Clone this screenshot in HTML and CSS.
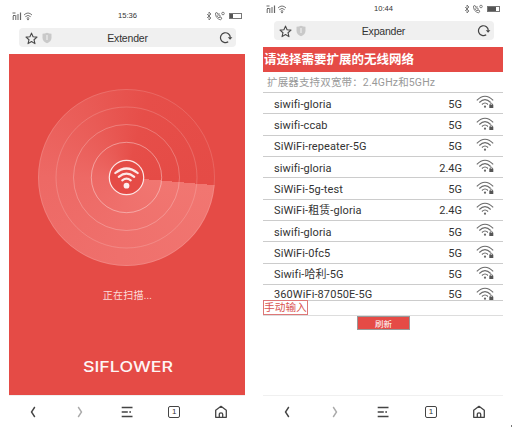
FILE: index.html
```
<!DOCTYPE html>
<html lang="zh-CN">
<head>
<meta charset="utf-8">
<title>Extender</title>
<link rel="stylesheet" href="styles.css">
</head>
<body>
<svg class="defs" width="0" height="0">
  <symbol id="signal" viewBox="0 0 24 10"><g fill="none" stroke="#666" stroke-width="1"><path d="M.5 2h3M1 4.500h2M1.200 5v4M3.800 4v5M6 3v6"/><path d="M8.500 1.500v7.500" stroke-width="1.200"/><path d="M12 4q4-4 8 0M13.300 5.700q2.700-2.600 5.400 0M14.700 7.300q1.300-1.300 2.600 0" stroke-width=".9"/></g><circle cx="16" cy="8.400" r=".8" fill="#555"/></symbol>
  <symbol id="tele" viewBox="0 0 20 10"><g fill="none" stroke="#666" stroke-width=".8"><path d="M1 3l4 4-2 2V1l2 2-4 4"/><path d="M9.500 2q-.5 5 5 7l1.500-2-2-1-1 1q-1.500-1-2-2.500l1-1-1-2z"/><path d="M13 2v3h2"/><circle cx="17" cy="2.500" r="1.300"/></g></symbol>
  <symbol id="star" viewBox="0 0 14 14"><path d="M7 1.200l1.700 3.900 4.200.4-3.200 2.800 1 4.200L7 10.300l-3.700 2.200 1-4.200L1.100 5.500l4.200-.4z" fill="none" stroke="#484848" stroke-width="1.200" stroke-linejoin="round"/></symbol>
  <symbol id="shield" viewBox="0 0 10 12"><path d="M5 .7q2.200 1 4.500 1v4q0 3.800-4.500 5.600Q.5 9.500.5 5.700v-4q2.300 0 4.500-1z" fill="#c9c9c9"/><path d="M5 3v5" stroke="#eee" stroke-width="1.200"/></symbol>
  <symbol id="reload" viewBox="0 0 14 12"><path d="M9.200 9.700A4.900 4.900 0 1 1 11.300 5.500" fill="none" stroke="#444" stroke-width="1.200"/><path d="M8.800 5.200h4.600l-2.300 2.600z" fill="#444"/></symbol>
  <symbol id="back" viewBox="0 0 8 12"><path d="M5.800 1L2.500 6l3.300 5" fill="none" stroke="currentColor" stroke-width="1.400"/></symbol>
  <symbol id="menu" viewBox="0 0 12 12"><path d="M.7 1.500h10.800M.7 6h6.100M8.300 6h1.700M.7 10.500h10.800" fill="none" stroke="#444" stroke-width="1.300"/></symbol>
  <symbol id="home" viewBox="0 0 14 14"><path d="M1.700 5.300L7 1.300l5.300 4v7H1.700zM5.300 12V9.300q0-1.500 1.700-1.500t1.700 1.500V12" fill="none" stroke="#444" stroke-width="1.300" stroke-linejoin="round"/></symbol>
  <symbol id="wifi" viewBox="0 0 18 14"><g fill="none" stroke="#6b6b6b" stroke-width="1.100"><path d="M.8 5.300Q9-2.900 17.200 5.300M3.300 7.500Q9 1.900 14.700 7.500M5.900 9.500Q9 6.500 12.100 9.500"/></g><circle cx="9" cy="11.700" r="1.100" fill="#666"/></symbol>
  <symbol id="wifi-lock" viewBox="0 0 18 14"><use href="#wifi" width="18" height="14"/><path d="M12.300 8h5.700v6h-5.700z" fill="#fff"/><path d="M13.300 9.700h4v3.300h-4z" fill="#555"/><path d="M14.200 10V8.900q1.100-1.300 2.200 0V10" fill="none" stroke="#555" stroke-width=".8"/></symbol>
</svg>
<main class="screens">
  <section class="phone extender">
    <header class="status">
      <svg class="signal"><use href="#signal"/></svg>
      <span class="clock">15:36</span>
      <span class="right"><svg class="tele"><use href="#tele"/></svg><i class="battery low"></i></span>
    </header>
    <div class="address">
      <div class="marks"><svg class="star"><use href="#star"/></svg><svg class="shield"><use href="#shield"/></svg></div>
      <span class="title">Extender</span>
      <svg class="reload"><use href="#reload"/></svg>
    </div>
    <div class="scan">
      <div class="radar">
        <svg viewBox="0 0 177 177" width="177" height="177">
          <g fill="none" stroke="#fff"><circle cx="88.500" cy="88.500" r="88" opacity=".14"/><circle cx="88.500" cy="88.500" r="70.500" opacity=".17"/><circle cx="88.500" cy="88.500" r="53" opacity=".24"/><circle cx="88.500" cy="88.500" r="35.200" opacity=".38"/></g>
          <circle cx="88.500" cy="88.500" r="17.200" fill="#e54b46" stroke="#fff" stroke-width="1.200" stroke-opacity=".85"/>
          <g fill="none" stroke="#fff" stroke-width="2.200" stroke-linecap="round" opacity=".88"><path d="M77.300 84Q88.500 75 99.700 84M80.800 87.800Q88.500 81.500 96.200 87.800M84.300 91.300Q88.500 88.100 92.700 91.300"/></g>
          <circle cx="88.500" cy="96.700" r="2.900" fill="#fff" opacity=".9"/>
        </svg>
      </div>
      <p class="scanning">正在扫描...</p>
      <svg class="brand" width="90" height="14" viewBox="0 0 90 14"><text x="0" y="12" textLength="90" lengthAdjust="spacingAndGlyphs">SIFLOWER</text></svg>
    </div>
    <nav class="toolbar">
      <svg class="arrow"><use href="#back"/></svg><svg class="arrow next"><use href="#back"/></svg><svg class="menu"><use href="#menu"/></svg><b class="tabs">1</b><svg class="home"><use href="#home"/></svg>
    </nav>
  </section>

  <section class="phone expander">
    <header class="status">
      <svg class="signal"><use href="#signal"/></svg>
      <span class="clock">10:44</span>
      <span class="right"><svg class="tele"><use href="#tele"/></svg><i class="battery"></i></span>
    </header>
    <div class="address">
      <div class="marks"><svg class="star"><use href="#star"/></svg><svg class="shield"><use href="#shield"/></svg></div>
      <span class="title">Expander</span>
      <svg class="reload"><use href="#reload"/></svg>
    </div>
    <div class="networks">
      <h1>请选择需要扩展的无线网络</h1>
      <p class="hint">扩展器支持双宽带：2.4GHz和5GHz</p>
      <ul>
        <li><span>siwifi-gloria</span><em>5G</em><svg><use href="#wifi-lock"/></svg></li>
        <li><span>siwifi-ccab</span><em>5G</em><svg><use href="#wifi-lock"/></svg></li>
        <li><span>SiWiFi-repeater-5G</span><em>5G</em><svg><use href="#wifi"/></svg></li>
        <li><span>siwifi-gloria</span><em>2.4G</em><svg><use href="#wifi-lock"/></svg></li>
        <li><span>SiWiFi-5g-test</span><em>5G</em><svg><use href="#wifi-lock"/></svg></li>
        <li><span>SiWiFi-租赁-gloria</span><em>2.4G</em><svg><use href="#wifi"/></svg></li>
        <li><span>siwifi-gloria</span><em>5G</em><svg><use href="#wifi-lock"/></svg></li>
        <li><span>SiWiFi-0fc5</span><em>5G</em><svg><use href="#wifi-lock"/></svg></li>
        <li><span>Siwifi-哈利-5G</span><em>5G</em><svg><use href="#wifi-lock"/></svg></li>
        <li><span>360WiFi-87050E-5G</span><em>5G</em><svg><use href="#wifi-lock"/></svg></li>
      </ul>
      <div class="manual"><span>手动输入</span></div>
      <button>刷新</button>
    </div>
    <nav class="toolbar">
      <svg class="arrow"><use href="#back"/></svg><svg class="arrow next"><use href="#back"/></svg><svg class="menu"><use href="#menu"/></svg><b class="tabs">1</b><svg class="home"><use href="#home"/></svg>
    </nav>
  </section>
  <i class="tick"></i>
</main>
</body>
</html>
```
FILE: styles.css
```
* { box-sizing: border-box; }
body { margin: 0; background: #fff; color: #333; font-family: Roboto, "Noto Sans CJK SC", sans-serif; overflow: hidden; }
svg { display: block; flex: none; }
.defs { position: absolute; }
.screens { display: flex; width: 527px; height: 427px; padding-left: 9px; }
.phone { display: flex; flex-direction: column; height: 427px; flex: none; }
.extender { width: 236px; margin-right: 18px; padding-top: 10px; }
.expander { width: 240px; padding-top: 3px; }

.status { display: grid; grid-template-columns: 1fr auto 1fr; align-items: center; height: 12px; padding: 0 3px; }
.signal { width: 24px; height: 10px; }
.clock { padding-left: 1px; font: 7.600px/12px "Liberation Sans", sans-serif; }
.right { display: flex; align-items: center; justify-content: flex-end; gap: 3px; }
.tele { width: 20px; height: 10px; }
.battery { width: 13px; height: 6px; border: 1px solid #777; background: linear-gradient(90deg, #555 70%, #fff 70%); }
.battery.low { background: linear-gradient(90deg, #555 30%, #fff 30%); }

.address { display: grid; grid-template-columns: 1fr auto 1fr; align-items: center; height: 19px; margin: 6px 9px 0 10px; padding: 0 3px 0 6px; background: #f0f0f0; border-radius: 4px; }
.marks { display: flex; align-items: center; gap: 4px; }
.star { width: 13px; height: 13px; }
.shield { width: 10px; height: 12px; }
.title { margin-right: 3px; text-align: center; font: 10.500px/20px "Liberation Sans", sans-serif; letter-spacing: -.2px; }
.reload { width: 14px; height: 12px; justify-self: end; }

.scan { height: 341px; margin-top: 7px; padding-top: 35px; display: flex; flex-direction: column; align-items: center; background: #e54b46; }
.radar { width: 177px; height: 177px; margin-right: 2px; border-radius: 50%; background: conic-gradient(from 95deg, #f17671 0deg, #ef706c 90deg, #ed6965 175deg, #e95b56 235deg, #e64e49 280deg, #e54b46 360deg); }
.scanning { margin: 22px 0 0 1px; font-size: 10px; line-height: 15px; color: #fbdcda; letter-spacing: .2px; }
.brand { margin-top: 57px; margin-left: 1px; overflow: visible; opacity: .95; }
.brand text { font: 500 14.500px Inter, sans-serif; fill: #fff; }

.toolbar { display: grid; grid-template-columns: repeat(5, 1fr); place-items: center; height: 32px; margin-top: auto; border-top: 1px solid #f0f0f0; }
.arrow { width: 8px; height: 12px; color: #444; }
.next { color: #aaa; transform: scaleX(-1); }
.menu { width: 12px; height: 12px; }
.tabs { width: 12px; height: 12px; border: 1.500px solid #444; border-radius: 2px; font: 8px/10px "Liberation Sans", sans-serif; text-align: center; }
.home { width: 14px; height: 14px; }

.expander .address { margin: 6px 9px 0 11px; padding-left: 5px; }
.networks { margin-top: 7px; }
.networks h1 { margin: 0; height: 25px; padding-left: 1px; background: #e54b46; color: #fff; font-size: 12.500px; line-height: 25px; font-weight: 700; white-space: nowrap; }
.hint { margin: 0; padding-left: 4px; height: 20px; font-size: 10.500px; line-height: 21px; color: #999; white-space: nowrap; letter-spacing: .15px; }
.networks ul { list-style: none; margin: 0; padding: 0; height: 208px; overflow: hidden; }
.networks li { display: flex; align-items: center; height: 21.350px; border-top: 1px solid #ccc; padding: 2px 9px 0 11px; font-size: 11px; line-height: 19px; }
.networks li:last-child { height: 16px; padding-top: 4px; line-height: 12px; }
.networks li span { flex: 1; white-space: nowrap; letter-spacing: .1px; }
.networks em { font-style: normal; margin-right: 14px; }
.networks li svg { width: 18px; height: 14px; margin-top: -4px; }
.networks li:last-child svg { margin-top: -1px; }
.manual { height: 16px; border-top: 1px solid #ccc; border-bottom: 1px solid #ddd; display: flex; }
.manual span { height: 15px; width: 45px; margin-top: -1px; border: 1px solid #d77; color: #d9534f; font-size: 10.700px; line-height: 14px; white-space: nowrap; }
.networks button { display: block; width: 53px; height: 14px; margin: 0 0 0 94px; padding: 0; border: 1px solid #999; background: #e54b46; color: #fff; font: 8.500px/11px "Noto Sans CJK SC", sans-serif; }
.tick { width: 1px; height: 2px; margin: 425px 0 0 8px; background: #777; }
```
